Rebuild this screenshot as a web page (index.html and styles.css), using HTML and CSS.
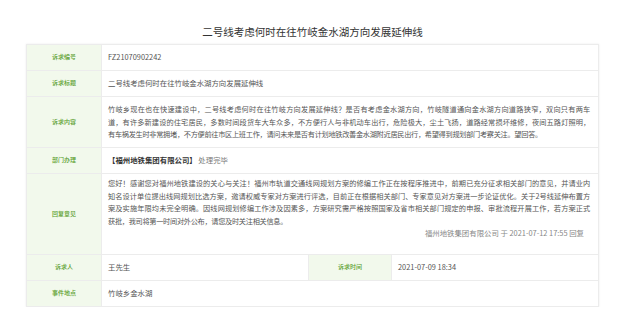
FILE: index.html
```html
<!DOCTYPE html>
<html lang="zh-CN">
<head>
    <meta charset="UTF-8">
    <meta name="viewport" content="width=device-width, initial-scale=1.0">
    <title>诉求详情</title>
    <link rel="stylesheet" href="styles.css">
</head>
<body>
    <div class="container">
        <h1>二号线考虑何时在往竹岐金水湖方向发展延伸线</h1>

        <table class="detail-table">
            <colgroup>
                <col class="col-label">
                <col class="col-value">
                <col class="col-label2">
                <col>
            </colgroup>
            <tbody>
                <tr>
                    <th>诉求编号</th>
                    <td colspan="3">FZ21070902242</td>
                </tr>
                <tr>
                    <th>诉求标题</th>
                    <td colspan="3">二号线考虑何时在往竹岐金水湖方向发展延伸线</td>
                </tr>
                <tr>
                    <th>诉求内容</th>
                    <td colspan="3" class="text">
                        <span class="line">竹岐乡现在也在快速建设中，二号线考虑何时在往竹岐方向发展延伸线？是否有考虑金水湖方向，竹岐隧道通向金水湖方向道路狭窄，双向只有两车</span>
                        <span class="line">道，有许多新建设的住宅居民，多数时间段货车大车众多，不方便行人与非机动车出行，危险极大，尘土飞扬，道路经常损坏维修，夜间五路灯照明，</span>
                        有车祸发生时非常拥堵，不方便前往市区上班工作，请问未来是否有计划地铁改善金水湖附近居民出行，希望得到规划部门考察关注。望回答。
                    </td>
                </tr>
                <tr>
                    <th>部门办理</th>
                    <td colspan="3"><span class="dept">【福州地铁集团有限公司】</span> <span class="status">处理完毕</span></td>
                </tr>
                <tr>
                    <th>回复意见</th>
                    <td colspan="3" class="text reply">
                        <span class="line">您好！感谢您对福州地铁建设的关心与关注！福州市轨道交通线网规划方案的修编工作正在按程序推进中，前期已充分征求相关部门的意见，并请业内</span>
                        <span class="line">知名设计单位提出线网规划比选方案，邀请权威专家对方案进行评选，目前正在根据相关部门、专家意见对方案进一步论证优化。关于2号线延伸布置方</span>
                        <span class="line">案及实施年限均未完全明确。因线网规划修编工作涉及因素多，方案研究需严格按照国家及省市相关部门规定的申报、审批流程开展工作，若方案正式</span>
                        <span class="last">获批，我司将第一时间对外公布，请您及时关注相关信息。</span>
                        <div class="sign">福州地铁集团有限公司 于 2021-07-12 17:55 回复</div>
                    </td>
                </tr>
                <tr>
                    <th>诉求人</th>
                    <td>王先生</td>
                    <th>诉求时间</th>
                    <td>2021-07-09 18:34</td>
                </tr>
                <tr>
                    <th>事件地点</th>
                    <td colspan="3">竹岐乡金水湖</td>
                </tr>
            </tbody>
        </table>
    </div>
</body>
</html>
```
FILE: styles.css
```css
body {
    font-family: "Noto Sans CJK SC", "Noto Sans", sans-serif;
    background-color: #fff;
    margin: 0;
    padding: 0;
}
.container {
    width: 573px;
    margin: 0 auto;
    padding-top: 25px;
}
h1 {
    text-align: center;
    color: #333;
    font-size: 10.5px;
    line-height: 14px;
    font-weight: normal;
    margin: 0 0 5px;
}
.detail-table {
    width: 100%;
    table-layout: fixed;
    border-collapse: collapse;
    box-shadow: 0 0 2px rgba(0, 0, 0, 0.08);
}
.col-label {
    width: 75px;
}
.col-value {
    width: 207px;
}
.col-label2 {
    width: 83px;
}
th, td {
    border: 1px solid #ececec;
    padding: 6.25px 6px;
    line-height: 12.5px;
    text-align: left;
    vertical-align: middle;
}
th {
    background-color: #f2f9ec;
    color: #5a9e2c;
    font-size: 6px;
    font-weight: 500;
    text-align: center;
}
td {
    color: #555;
    font-size: 7.4px;
}
.text {
    font-size: 7.2px;
    letter-spacing: -0.3px;
    padding-right: 8px;
}
.text .line {
    display: block;
    white-space: nowrap;
    text-align: justify;
    text-align-last: justify;
}
.text .last {
    display: block;
}
.dept {
    color: #333;
    font-weight: bold;
}
.status {
    color: #777;
}
.reply {
    padding-top: 3px;
    padding-bottom: 14px;
}
.sign {
    text-align: right;
    color: #888;
    font-size: 7.4px;
    letter-spacing: 0;
    padding-right: 6px;
}
```
